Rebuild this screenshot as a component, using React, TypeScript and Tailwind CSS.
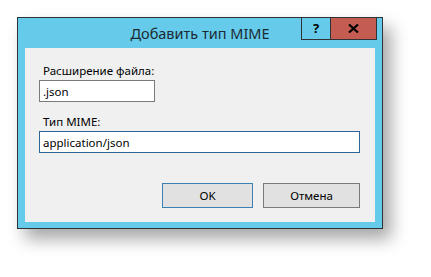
import { useState } from 'react';

export default function App() {
  const [ext, setExt] = useState('.json');
  const [mime, setMime] = useState('application/json');

  return (
    <div className="w-[431px] h-[277px] bg-white pl-[17px] pt-[17px]" style={{ fontFamily: '"Noto Sans", "Open Sans", sans-serif' }}>
      <div className="relative w-[366px] h-[212px] border border-[#2f3336] bg-[#66cbea] flex flex-col shadow-[8px_10px_16px_rgba(0,0,0,0.35)]">
        <div className="h-[30px] flex items-center justify-center text-[14.5px] text-[#1b2a33] pt-[1px]">
          Добавить тип MIME
        </div>
        <div className="absolute top-[-1px] right-[5px] flex">
          <button className="w-[30px] h-[23px] border border-[#2f3336] bg-[#66cbea] flex items-center justify-center text-[13px] font-bold text-black leading-none">?</button>
          <button className="w-[46px] h-[23px] border border-l-0 border-[#2f3336] bg-[#c45c51] flex items-center justify-center">
            <svg width="11" height="9" viewBox="0 0 11 9">
              <path d="M1 0.5 L10 8.5 M10 0.5 L1 8.5" stroke="#000" strokeWidth="2.2" />
            </svg>
          </button>
        </div>
        <div className="mx-[7px] mb-[6px] flex-1 bg-[#f0f0f0] px-[14px] pt-[15px] text-[11.5px] text-black">
          <label className="block pl-[4px] leading-[16px] mb-[1px]">Расширение файла:</label>
          <input value={ext} onChange={(e) => setExt(e.target.value)}
            className="w-[116px] h-[22px] border border-[#7a7a7a] bg-white px-[3px] text-[11.5px] outline-none" />
          <label className="block pl-[4px] leading-[16px] mt-[12px] mb-[1px]">Тип MIME:</label>
          <input value={mime} onChange={(e) => setMime(e.target.value)}
            className="w-[321px] h-[22px] border border-[#2e6598] bg-white px-[3px] text-[11.5px] outline-none" />
          <div className="flex justify-end gap-[10px] mt-[30px] pr-[1px]">
            <button className="w-[91px] h-[25px] border border-[#3c7fb1] bg-[#e1e1e1] text-[11.5px]">OK</button>
            <button className="w-[97px] h-[25px] border border-[#7a7a7a] bg-[#e1e1e1] text-[11.5px]">Отмена</button>
          </div>
        </div>
      </div>
    </div>
  );
}
